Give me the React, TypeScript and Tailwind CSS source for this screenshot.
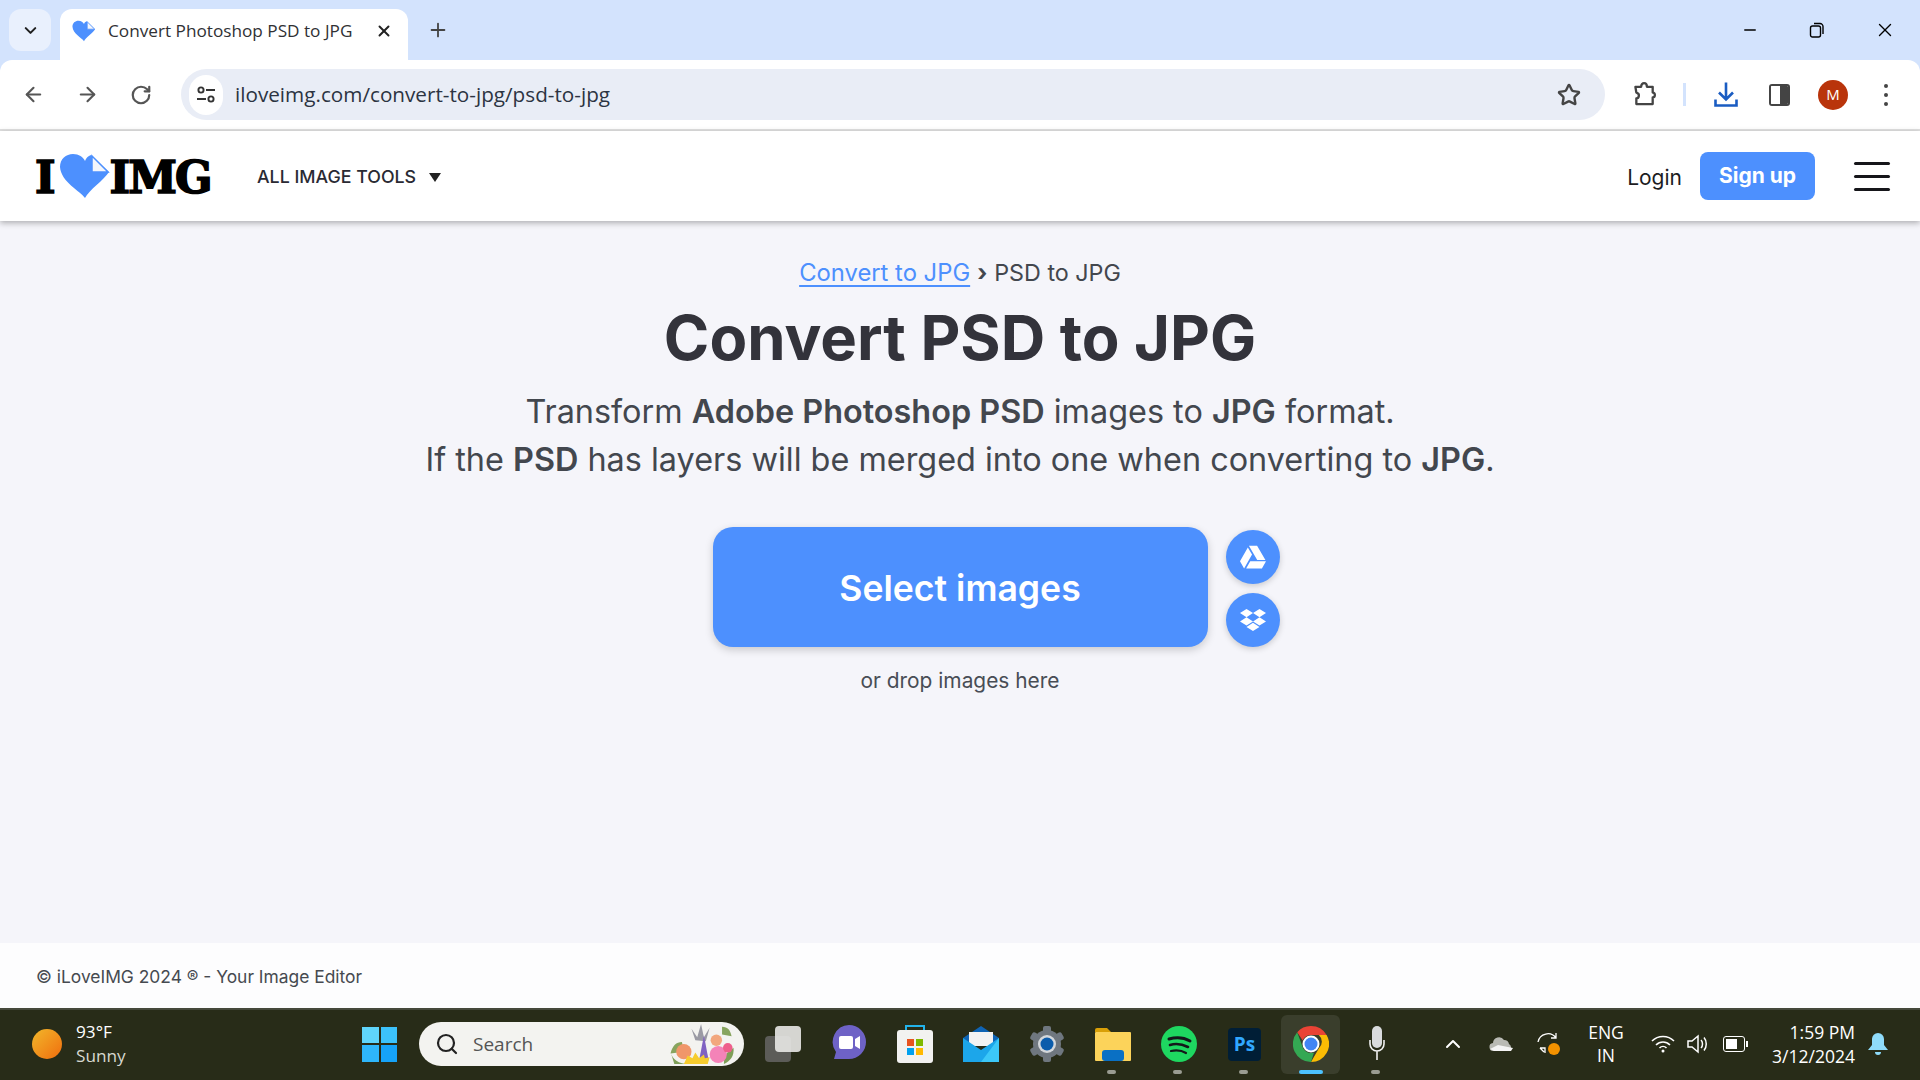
import { ArrowLeft, ArrowRight, ChevronDown, ChevronUp, Plus, RotateCw, Star, X, Minus, Search } from "lucide-react";
import { FaDropbox, FaGoogleDrive } from "react-icons/fa";

const ui = "font-['Open_Sans',sans-serif]";

function HeartLogo({ className }: { className: string }) {
  return (
    <svg viewBox="0 0 52 46" className={className}>
      <path d="M26 45C21 38 2 29 1 14 1 6 7 1 14 1c6 0 10 3 12 7 1-3 3-5 6-6l18 17C45 27 30 37 26 45Z" fill="#4d90fe" />
      <path d="M33 3v16h16Z" fill="#f4f6fb" stroke="#4d90fe" strokeWidth="1.5" />
    </svg>
  );
}

function TabStrip() {
  return (
    <div className="flex h-[60px] items-end bg-[#d3e3fd] pl-[9px]">
      <div className="mb-[9px] flex h-[42px] w-[42px] items-center justify-center rounded-xl bg-[#e9f0fd]">
        <ChevronDown size={19} strokeWidth={2.6} className="text-[#1f1f1f]" />
      </div>
      <div className={`${ui} ml-[9px] flex h-[51px] w-[348px] items-center rounded-t-xl bg-white pb-[7px] pl-3`}>
        <HeartLogo className="h-[22px] w-6 shrink-0" />
        <span className="ml-3 w-[267px] whitespace-nowrap text-[17.2px] text-[#303134]">Convert Photoshop PSD to JPG</span>
        <X size={18} strokeWidth={2.6} className="text-[#222]" />
      </div>
      <div className="mb-[9px] ml-[19px] flex h-[42px] w-[22px] items-center justify-center">
        <Plus size={22} strokeWidth={2} className="text-[#444]" />
      </div>
      <div className="mb-[9px] ml-auto flex h-[42px] items-center pr-[24px] text-black">
        <Minus size={18} strokeWidth={1.8} />
        <svg viewBox="0 0 16 16" className="ml-[50px] h-4 w-4" fill="none" stroke="currentColor" strokeWidth="1.4">
          <rect x="1.5" y="4" width="10" height="11" rx="2" />
          <path d="M5 1.5h6a3 3 0 0 1 3 3V12" />
        </svg>
        <X size={22} strokeWidth={1.5} className="ml-[49px]" />
      </div>
    </div>
  );
}

function Toolbar() {
  return (
    <div className="flex h-[71px] items-center rounded-t-xl border-b-2 border-[#e1e1e1] bg-white pl-[22px]">
      <ArrowLeft size={23} strokeWidth={2.2} className="text-[#555]" />
      <ArrowRight size={23} strokeWidth={2.2} className="ml-[31px] text-[#555]" />
      <RotateCw size={22} strokeWidth={2.4} className="ml-[31px] text-[#555]" />
      <div className="ml-[29px] flex h-[51px] w-[1424px] items-center rounded-full bg-[#e9edf6] pl-2">
        <div className="flex h-[40px] w-[34px] items-center justify-center rounded-full bg-white">
          <svg viewBox="0 0 20 20" className="h-5 w-5" fill="none" stroke="#333" strokeWidth="1.9">
            <circle cx="5" cy="5" r="2.6" />
            <path d="M10 5h9M1 14h9" />
            <circle cx="15" cy="14" r="2.6" />
          </svg>
        </div>
        <span className={`${ui} ml-[12px] text-[20.7px] text-[#2c3442]`}>iloveimg.com/convert-to-jpg/psd-to-jpg</span>
        <Star size={24} strokeWidth={2.4} className="ml-auto mr-6 text-[#444]" />
      </div>
      <svg viewBox="0 0 24 26" className="ml-[28px] h-[25px] w-6" fill="none" stroke="#444" strokeWidth="2.4" strokeLinejoin="round">
        <path d="M2 5h6c0-5 6-5 6 0h6v6c3 0 3 5 0 5v7H3v-6c3 0 4-5 0-6Z" />
      </svg>
      <div className="ml-[26px] h-[23px] w-[3px] bg-[#d3e3fd]" />
      <svg viewBox="0 0 24 26" className="ml-[28px] h-[27px] w-6" fill="none" stroke="#1a5cc2" strokeWidth="2.6">
        <path d="M12 1v17M5 11l7 7 7-7" />
        <path d="M1.5 18v6h21v-6" />
      </svg>
      <div className="ml-[31px] flex h-[22px] w-[21px] overflow-hidden rounded-[3px] border-2 border-[#444]">
        <div className="w-1/2 bg-white" />
        <div className="w-1/2 bg-[#444]" />
      </div>
      <div className={`${ui} ml-[28px] flex h-[30px] w-[30px] items-center justify-center rounded-full bg-[#b9340b] text-[15px] text-white`}>M</div>
      <div className="ml-[36px] flex flex-col gap-[5px]">
        <span className="h-1 w-1 rounded-full bg-[#444]" />
        <span className="h-1 w-1 rounded-full bg-[#444]" />
        <span className="h-1 w-1 rounded-full bg-[#444]" />
      </div>
    </div>
  );
}

function SiteNav() {
  return (
    <header className="relative z-10 flex h-[90px] shrink-0 items-center bg-white pl-[35px] pr-[30px] shadow-[0_2px_6px_rgba(0,0,0,0.3)] font-['Inter',sans-serif]">
      <div className="flex w-[222px] translate-y-[2px] items-center font-['DejaVu_Serif',serif] text-[44px] font-black leading-none text-black [-webkit-text-stroke:1.6px_black]">
        <span>I</span>
        <HeartLogo className="ml-[3px] h-[46px] w-[52px] shrink-0 -translate-y-[2px]" />
        <span className="-ml-[1px] -tracking-[2px]">IMG</span>
      </div>
      <span className="translate-y-px text-[17.8px] font-medium text-[#2a2a33]">ALL IMAGE TOOLS</span>
      <span className="ml-[13px] h-0 w-0 translate-y-px border-x-[6.5px] border-t-[9px] border-x-transparent border-t-[#222]" />
      <span className="ml-auto translate-y-[2px] text-[21px] text-[#1c1c22]">Login</span>
      <div className="ml-[18px] flex h-[48px] w-[115px] items-center justify-center rounded-lg bg-[#4d90fe] text-[21px] font-bold text-white">Sign up</div>
      <div className="ml-[39px] flex w-[36px] flex-col gap-[10px]">
        <span className="h-[3px] rounded-full bg-[#16161a]" />
        <span className="h-[3px] rounded-full bg-[#16161a]" />
        <span className="h-[3px] rounded-full bg-[#16161a]" />
      </div>
    </header>
  );
}

function Hero() {
  return (
    <main className="flex flex-1 flex-col items-center bg-[#f5f5fa] pt-[36px] text-[#43474e] font-['Inter',sans-serif]">
      <div className="flex h-8 items-center text-[23.3px] leading-8">
        <a className="text-[23.8px] text-[#4d90fe] underline decoration-2 underline-offset-[4px]">Convert to JPG</a>
        <span className="mx-[7px] font-bold">›</span>
        <span>PSD to JPG</span>
      </div>
      <h1 className="mt-[8px] text-[61.6px] font-bold leading-[82px] text-[#33333b]">Convert PSD to JPG</h1>
      <p className="mt-[9px] text-center text-[32.4px] leading-[48px]">
        Transform <b className="font-semibold">Adobe Photoshop PSD</b> images to <b className="font-semibold">JPG</b> format.
        <br />
        If the <b className="font-semibold">PSD</b> has layers will be merged into one when converting to <b className="font-semibold">JPG</b>.
      </p>
      <div className="mt-[43px] flex w-[495px] items-center">
        <div className="relative flex h-[120px] w-[495px] shrink-0 items-center justify-center rounded-[20px] bg-[#4d90fe] pt-[3px] text-[35.6px] font-semibold text-white shadow-[0_3px_8px_rgba(0,0,0,0.18)]">
          Select images
          <div className="absolute left-[513px] top-[3px] flex flex-col gap-[9px]">
            <div className="flex h-[54px] w-[54px] items-center justify-center rounded-full bg-[#4d90fe] shadow-[0_2px_6px_rgba(0,0,0,0.18)]">
              <FaGoogleDrive size={26} />
            </div>
            <div className="flex h-[54px] w-[54px] items-center justify-center rounded-full bg-[#4d90fe] shadow-[0_2px_6px_rgba(0,0,0,0.18)]">
              <FaDropbox size={26} />
            </div>
          </div>
        </div>
      </div>
      <p className="mt-[20px] text-[20.9px] leading-7 text-[#484d55]">or drop images here</p>
    </main>
  );
}

function Flowers() {
  return (
    <svg viewBox="0 0 70 44" className="h-[42px] w-[70px]">
      <path d="M28 18l-4-12 6 9 4-14 3 14 6-10-4 14Z" fill="#9a9aa4" />
      <path d="M2 32c2-8 6-12 12-12l2 10ZM56 4c6 0 9 4 10 10l-10-2Z" fill="#87a45e" />
      <path d="M2 30c2 8 8 13 20 13H6Z" fill="#7f9f58" />
      <path d="M58 34l10-8c1 8-3 14-10 17Z" fill="#7f9f58" />
      <circle cx="16" cy="30" r="8" fill="#f0966a" />
      <path d="M37 13l5 26H32Z" fill="#7f62c2" />
      <circle cx="50" cy="18" r="6" fill="#f2a77e" />
      <circle cx="52" cy="33" r="9" fill="#f483b8" />
      <circle cx="62" cy="26" r="5" fill="#ee5f8b" />
      <path d="M16 43l4-9 5 3 3-6 4 6 5-4 1 4 5-1-2 7Z" fill="#f6cc2e" />
    </svg>
  );
}

function ChromeIcon() {
  return (
    <svg viewBox="0 0 36 36" className="h-9 w-9">
      <path d="M18 0a18 18 0 0 1 15.6 9H18a9 9 0 0 0-8.3 5.5L4.2 6.3A18 18 0 0 1 18 0Z" fill="#ea4335" />
      <path d="M33.6 9A18 18 0 0 1 18 36l7.8-13.5A9 9 0 0 0 25.8 9Z" fill="#fbbc04" />
      <path d="M18 36A18 18 0 0 1 4.200 6.300L10.200 22.500A9 9 0 0 0 21 26.500Z" fill="#34a853" />
      <circle cx="18" cy="18" r="8.500" fill="#fff" />
      <circle cx="18" cy="18" r="6.500" fill="#4285f4" />
    </svg>
  );
}

function TaskItem({ children, mark, active }: { children: React.ReactNode; mark?: boolean; active?: boolean }) {
  return (
    <div className={`relative flex h-[59px] w-[59px] shrink-0 items-center justify-center rounded-md ${active ? "bg-[#3a3e2c]" : ""}`}>
      {children}
      {mark && <span className="absolute bottom-0 left-[24px] h-1 w-[9px] rounded-full bg-[#9a9c92]" />}
      {active && <span className="absolute bottom-0 left-[18px] h-1 w-[24px] rounded-full bg-[#4cc2ff]" />}
    </div>
  );
}

function Taskbar() {
  return (
    <footer className={`${ui} flex h-[72px] shrink-0 items-center border-t-2 border-[#46493c] bg-[#282c18] pb-[2px] pl-8 text-white`}>
      <div className="h-[30px] w-[30px] shrink-0 rounded-full bg-gradient-to-br from-[#f0b62a] to-[#ef6c0c]" />
      <div className="ml-[14px] w-[286px] text-[17.2px] leading-6">
        <div>93°F</div>
        <div className="text-[#d7d8d0]">Sunny</div>
      </div>
      <div className="grid h-[35px] w-[35px] shrink-0 grid-cols-2 gap-[2px]">
        <span className="bg-[#5fd5fb]" />
        <span className="bg-[#3cc2fb]" />
        <span className="bg-[#2eb6fa]" />
        <span className="bg-[#16a3f8]" />
      </div>
      <div className="ml-[22px] flex h-[44px] w-[325px] shrink-0 items-center rounded-full bg-[#f3f3f0] pl-4 pr-[7px] text-[#555]">
        <Search size={24} strokeWidth={2.2} className="text-[#222]" />
        <span className="ml-[14px] text-[19px]">Search</span>
        <div className="ml-auto">
          <Flowers />
        </div>
      </div>
      <div className="ml-[9px] flex items-center gap-[7px]">
        <TaskItem>
          <div className="relative h-9 w-9">
            <span className="absolute bottom-0 left-0 h-[26px] w-[26px] rounded-sm bg-[#5c5c58]" />
            <span className="absolute right-0 top-0 h-[26px] w-[26px] rounded-sm bg-[#e8e8e6]/90" />
          </div>
        </TaskItem>
        <TaskItem>
          <svg viewBox="0 0 34 38" className="h-[38px] w-[34px]">
            <path d="M17 0a17 17 0 0 1 0 34H2l2-7A17 17 0 0 1 17 0Z" fill="#6e62c6" />
            <rect x="7" y="11" width="14" height="13" rx="2" fill="#fff" />
            <path d="M23 14l5-3v13l-5-3Z" fill="#fff" />
          </svg>
        </TaskItem>
        <TaskItem>
          <svg viewBox="0 0 36 38" className="h-[38px] w-9">
            <path d="M9 6V1h18v5" fill="none" stroke="#22b3ea" strokeWidth="2" />
            <rect y="5" width="36" height="33" rx="3" fill="#f2f2f0" />
            <rect x="10" y="14" width="7" height="7" fill="#e8531f" />
            <rect x="19" y="14" width="7" height="7" fill="#7fb900" />
            <rect x="10" y="23" width="7" height="7" fill="#00a1ef" />
            <rect x="19" y="23" width="7" height="7" fill="#ffb900" />
          </svg>
        </TaskItem>
        <TaskItem>
          <svg viewBox="0 0 36 36" className="h-9 w-9">
            <path d="M0 12 18 0l18 12v4H0Z" fill="#0f64b4" />
            <path d="M6 6h24v14H6Z" fill="#f3f3f3" />
            <path d="M0 12l18 12 18-12v24H0Z" fill="#1ca6ea" />
            <path d="M36 12v24H18Z" fill="#3cc8f8" />
          </svg>
        </TaskItem>
        <TaskItem>
          <svg viewBox="0 0 36 36" className="h-9 w-9">
            <circle cx="18" cy="18" r="14" fill="#6f777f" />
            <g fill="#6f777f">
              <rect x="14" y="0" width="8" height="36" rx="2" />
              <rect x="14" y="0" width="8" height="36" rx="2" transform="rotate(60 18 18)" />
              <rect x="14" y="0" width="8" height="36" rx="2" transform="rotate(120 18 18)" />
            </g>
            <circle cx="18" cy="18" r="9" fill="#d3d7db" />
            <circle cx="18" cy="18" r="6.500" fill="#0b5cab" />
          </svg>
        </TaskItem>
        <TaskItem mark>
          <svg viewBox="0 0 36 34" className="h-[34px] w-9">
            <path d="M0 3a2 2 0 0 1 2-2h10l4 4H0Z" fill="#d9a008" />
            <rect y="5" width="36" height="29" rx="1" fill="#fcd35a" />
            <rect x="7" y="23" width="22" height="11" rx="3" fill="#0a70c4" />
          </svg>
        </TaskItem>
        <TaskItem mark>
          <svg viewBox="0 0 36 36" className="h-9 w-9" fill="none" stroke="#14171a" strokeLinecap="round">
            <circle cx="18" cy="18" r="18" fill="#1ed760" stroke="none" />
            <path d="M8 13c7-2 14-2 21 2" strokeWidth="3" />
            <path d="M9 19c6-2 12-1 18 2" strokeWidth="2.600" />
            <path d="M10 25c5-1 10-1 15 2" strokeWidth="2.200" />
          </svg>
        </TaskItem>
        <TaskItem mark>
          <div className="flex h-[33px] w-[33px] items-center justify-center rounded bg-[#001e36] text-[19px] font-bold text-[#31a8ff]">Ps</div>
        </TaskItem>
        <TaskItem active>
          <ChromeIcon />
        </TaskItem>
        <TaskItem mark>
          <svg viewBox="0 0 16 36" className="h-9 w-4" fill="none">
            <rect x="3" y="0" width="10" height="22" rx="5" fill="#d9dbdd" />
            <path d="M1 14v4a7 7 0 0 0 14 0v-4M8 25v9" stroke="#f1f1f1" strokeWidth="1.600" />
          </svg>
        </TaskItem>
      </div>
      <ChevronUp size={24} strokeWidth={2} className="ml-[35px] shrink-0" />
      <svg viewBox="0 0 24 16" className="ml-[24px] h-4 w-6 shrink-0">
        <path d="M5 15a4 4 0 0 1-1-8 6 6 0 0 1 11-3 5 5 0 0 1 5 4 4 4 0 0 1 0 7Z" fill="#b9bab4" />
        <path d="M1 13l8-4 15 3-2 3H5Z" fill="#f4f4f4" />
      </svg>
      <svg viewBox="0 0 24 24" className="ml-6 h-6 w-6 shrink-0" fill="none" stroke="#fff" strokeWidth="1.300">
        <path d="M1 10a10 10 0 0 1 18-4M19 1v5h-5M3 16l4 4M3 16h5v5" />
        <circle cx="17" cy="17" r="6" fill="#f39200" stroke="none" />
      </svg>
      <div className="ml-[26px] w-[38px] shrink-0 text-center text-[17.5px] leading-[23px]">
        ENG
        <br />
        IN
      </div>
      <svg viewBox="0 0 24 18" className="ml-[26px] h-[18px] w-6 shrink-0" fill="none" stroke="#fff" strokeWidth="1.600">
        <path d="M1 6c6-6 16-6 22 0M5 10c4-4 10-4 14 0M8.500 13c2-2 5-2 7 0" />
        <circle cx="12" cy="16" r="1.500" fill="#fff" stroke="none" />
      </svg>
      <svg viewBox="0 0 24 20" className="ml-3 h-5 w-6 shrink-0" fill="none" stroke="#fff" strokeWidth="1.500">
        <path d="M1 7v6h4l6 5V2L5 7Z" />
        <path d="M14 6c2 2 2 6 0 8M17 3.500c3 3.500 3 9.500 0 13" />
      </svg>
      <div className="relative ml-3 flex h-4 w-[22px] shrink-0 items-center rounded-[3px] border-[1.5px] border-white p-[2px]">
        <span className="h-full w-[70%] bg-white" />
        <span className="absolute -right-[4px] h-[6px] w-[2px] bg-white" />
      </div>
      <div className="ml-[2px] w-[108px] shrink-0 text-right text-[17.5px] leading-6">
        1:59 PM
        <br />
        3/12/2024
      </div>
      <svg viewBox="0 0 20 24" className="ml-[13px] h-6 w-5 shrink-0" fill="#8fdcfb">
        <path d="M10 1a6 6 0 0 1 6 6v6l4 5H0l4-5V7a6 6 0 0 1 6-6Z" />
        <path d="M7 20h6a3 3 0 0 1-6 0Z" />
      </svg>
    </footer>
  );
}

export default function App() {
  return (
    <div className="flex h-[1080px] w-[1920px] flex-col overflow-hidden bg-[#d3e3fd]">
      <TabStrip />
      <Toolbar />
      <SiteNav />
      <Hero />
      <div className="flex h-[65px] shrink-0 items-center bg-[#fdfdfe] pl-[36px] pt-[3px] font-['Inter',sans-serif] text-[17.4px] text-[#464a50]">
        © iLoveIMG 2024 ® - Your Image Editor
      </div>
      <Taskbar />
    </div>
  );
}
